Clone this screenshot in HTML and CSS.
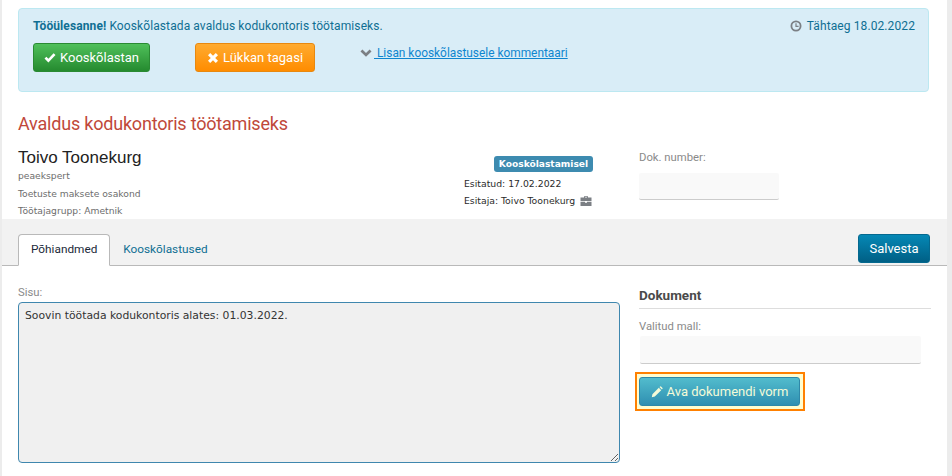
FILE: index.html
```html
<!DOCTYPE html>
<html lang="en">
<head>
  <meta charset="UTF-8">
  <meta name="viewport" content="width=device-width, initial-scale=1.0">
  <title>Avaldus kodukontoris töötamiseks</title>
  <link rel="stylesheet" href="styles.css">
</head>
<body>
  <div class="page">
    <!-- Tööülesanne -->
    <section class="task">
      <div class="task-top">
        <p class="task-text"><strong>Tööülesanne!</strong> Kooskõlastada avaldus kodukontoris töötamiseks.</p>
        <span class="deadline">
          <svg class="icon-clock" viewBox="0 0 12 12"><circle cx="6" cy="6" r="4.6" fill="none" stroke="#7b7f84" stroke-width="1.8"/><path d="M6 3.2V6.4H8.6" fill="none" stroke="#7b7f84" stroke-width="1.2"/></svg>
          Tähtaeg 18.02.2022
        </span>
      </div>
      <div class="task-actions">
        <button class="btn btn-green">
          <svg class="icon" viewBox="0 0 12 12"><path d="M.5 6.5L4.4 10.6L11.5 3L9.6 1.2L4.4 6.8L2.4 4.7Z" fill="#fff"/></svg>
          Kooskõlastan
        </button>
        <button class="btn btn-orange">
          <svg class="icon" viewBox="0 0 12 12"><path d="M1 3.2L3.2 1L6 3.8L8.8 1L11 3.2L8.2 6L11 8.8L8.8 11L6 8.2L3.2 11L1 8.8L3.8 6Z" fill="#fff"/></svg>
          Lükkan tagasi
        </button>
        <a class="comment-link" href="javascript:void(0);">
          <svg class="icon-chevron" viewBox="0 0 12 8"><path d="M.5 2.4L2.4 .5L6 4L9.6 .5L11.5 2.4L6 7.8Z" fill="#7b7f84"/></svg>
          <span class="comment-text"> Lisan kooskõlastusele kommentaari</span>
        </a>
      </div>
    </section>

    <h1 class="doc-title">Avaldus kodukontoris töötamiseks</h1>

    <div class="info">
      <div class="person">
        <div class="person-name">Toivo Toonekurg</div>
        <div class="person-line">peaekspert</div>
        <div class="person-line">Toetuste maksete osakond</div>
        <div class="person-line">Töötajagrupp: Ametnik</div>
      </div>
      <div class="status">
        <span class="badge">Kooskõlastamisel</span>
        <div class="status-line">Esitatud: 17.02.2022</div>
        <div class="status-line">Esitaja: Toivo Toonekurg
          <svg class="icon-case" viewBox="0 0 12 12"><path d="M4 2.5V1.2H8V2.5H11.5V6H.5V2.5ZM5 2.5H7V2H5ZM.5 6.8H5V7.8H7V6.8H11.5V11H.5Z" fill="#7b7f84"/></svg>
        </div>
      </div>
      <div class="number">
        <label class="field-label">Dok. number:</label>
        <div class="field number-field"></div>
      </div>
    </div>

    <div class="tabbar">
      <nav class="tabs">
        <a class="tab active" href="javascript:void(0);">Põhiandmed</a>
        <a class="tab" href="javascript:void(0);">Kooskõlastused</a>
      </nav>
      <button class="btn btn-save">Salvesta</button>
    </div>

    <main class="content">
      <div class="main-col">
        <label class="field-label">Sisu:</label>
        <textarea class="body-text" readonly>Soovin töötada kodukontoris alates: 01.03.2022.</textarea>
      </div>
      <aside class="doc-col">
        <h2 class="doc-heading">Dokument</h2>
        <label class="field-label">Valitud mall:</label>
        <div class="field template-field"></div>
        <div class="highlight">
          <button class="btn btn-info">
            <svg class="icon icon-pencil" viewBox="0 0 12 12"><path d="M.8 11.2L1.4 8.2L7.8 1.8L10.2 4.2L3.8 10.6ZM8.5 1.1L9.2 .5Q9.6 .2 10 .5L11.5 2Q11.8 2.4 11.5 2.8L10.9 3.5Z" fill="#f4fbd8"/></svg>
            Ava dokumendi vorm
          </button>
        </div>
      </aside>
    </main>
  </div>
</body>
</html>
```

FILE: styles.css
```css
html, body {
  height: 100%;
}
body {
  margin: 0;
  font-family: Roboto, Arial, sans-serif;
  font-size: 12px;
  background-color: #ececec;
  color: #333333;
  overflow: hidden;
}
.page {
  box-sizing: border-box;
  width: 945px;
  height: 476px;
  margin-left: 2px;
  padding-top: 8px;
  background-color: #ffffff;
}
.task {
  box-sizing: border-box;
  width: 911px;
  height: 84px;
  margin-left: 16px;
  padding: 9px 13px 0 14px;
  background-color: #d9edf7;
  border: 1px solid #bce8f1;
  border-radius: 4px;
  color: #0f6f93;
}
.task-top {
  display: flex;
  justify-content: space-between;
  font-size: 12px;
  letter-spacing: .1px;
  line-height: 16px;
}
.task-text {
  margin: 0;
}
.deadline {
  display: flex;
  align-items: center;
  gap: 5px;
}
.icon-clock {
  width: 12px;
  height: 12px;
}
.task-actions {
  display: flex;
  align-items: flex-start;
  margin-top: 9px;
}
.btn {
  display: inline-flex;
  align-items: center;
  justify-content: center;
  gap: 4px;
  box-sizing: border-box;
  padding: 0;
  border-radius: 3px;
  font-family: Roboto, Arial, sans-serif;
  font-size: 13px;
  color: #ffffff;
  cursor: pointer;
}
.icon {
  width: 12px;
  height: 12px;
}
.btn-green {
  width: 117px;
  height: 29px;
  background: linear-gradient(#4fc05a, #258a2f);
  border: 1px solid #2a8a33;
}
.btn-orange {
  width: 120px;
  height: 29px;
  margin-left: 45px;
  background: linear-gradient(#ffab30, #ff8c00);
  border: 1px solid #e8880f;
}
.comment-link {
  display: flex;
  align-items: center;
  gap: 2px;
  margin: 3px 0 0 45px;
  font-size: 11.9px;
  color: #0f86cf;
  text-decoration: none;
}
.icon-chevron {
  width: 12px;
  height: 8px;
}
.comment-text {
  text-decoration: underline;
  white-space: pre;
}
.doc-title {
  margin: 20px 0 0 16px;
  font-size: 18px;
  font-weight: 400;
  letter-spacing: -.2px;
  line-height: 24px;
  color: #c0483a;
}
.info {
  display: flex;
  box-sizing: border-box;
  height: 72px;
  margin-top: 11px;
  padding: 2px 0 0 16px;
}
.person {
  width: 446px;
}
.person-name {
  font-family: "Liberation Sans", Arial, sans-serif;
  font-size: 17px;
  line-height: 18px;
  color: #222222;
}
.person-line {
  font-family: "DejaVu Sans", sans-serif;
  font-size: 9.2px;
  line-height: 17.5px;
  color: #6d6d6d;
}
.status {
  width: 175px;
  padding-top: 7px;
  font-family: "DejaVu Sans", sans-serif;
  font-size: 9.3px;
  color: #2b2b2b;
}
.badge {
  display: block;
  box-sizing: border-box;
  width: 99px;
  height: 16px;
  margin: 0 0 5px 30px;
  background-color: #3d8bb0;
  border-radius: 3px;
  color: #ffffff;
  font-size: 9.1px;
  font-weight: 700;
  line-height: 16px;
  text-align: center;
}
.status-line {
  display: flex;
  align-items: center;
  gap: 5px;
  margin-top: 3px;
  line-height: 14px;
}
.icon-case {
  width: 12px;
  height: 12px;
}
.field-label {
  display: block;
  font-size: 11.3px;
  line-height: 13px;
  color: #8a8a8a;
}
.field {
  background-color: #f9f9f9;
  border-bottom: 1px solid #cccccc;
  border-radius: 2px;
}
.number {
  padding-top: 2px;
}
.number-field {
  width: 140px;
  height: 26px;
  margin-top: 9px;
}
.tabbar {
  display: flex;
  justify-content: space-between;
  align-items: flex-end;
  box-sizing: border-box;
  height: 47px;
  padding: 0 17px 0 16px;
  background-color: #f2f2f2;
  border-bottom: 1px solid #b9b9b9;
}
.tabs {
  display: flex;
  margin-bottom: -1px;
}
.tab {
  box-sizing: border-box;
  height: 32px;
  padding: 0 12px;
  border: 1px solid transparent;
  border-radius: 4px 4px 0 0;
  font-size: 11.8px;
  line-height: 29px;
  color: #0f6f93;
  text-decoration: none;
}
.tab.active {
  background-color: #ffffff;
  border-color: #b9b9b9;
  border-bottom-color: #ffffff;
  color: #1b2a3a;
}
.btn-save {
  width: 72px;
  height: 29px;
  margin-bottom: 2px;
  background: linear-gradient(#0588b5, #005f85);
  border: 1px solid #05698f;
}
.content {
  display: flex;
  padding: 20px 0 0 16px;
}
.main-col {
  width: 602px;
}
.body-text {
  display: block;
  box-sizing: border-box;
  width: 602px;
  height: 161px;
  margin-top: 3px;
  padding: 6px 6px;
  background-color: #f0f0f0;
  border: 1px solid #3f87ae;
  border-radius: 4px;
  outline: none;
  font-family: "DejaVu Sans", sans-serif;
  font-size: 10.8px;
  line-height: 14px;
  color: #333333;
}
.doc-col {
  width: 292px;
  margin-left: 19px;
}
.doc-heading {
  box-sizing: border-box;
  height: 23px;
  margin: 0 0 11px;
  padding-top: 1px;
  border-bottom: 1px solid #dddddd;
  font-size: 13.5px;
  line-height: 16px;
  color: #4a4a4a;
}
.template-field {
  width: 281px;
  height: 27px;
  margin: 3px 0 0 1px;
}
.highlight {
  box-sizing: border-box;
  width: 170px;
  height: 39px;
  margin: 8px 0 0 -4px;
  padding: 3px 2px;
  background-color: #fffdd0;
  border: 2px solid #ff8000;
}
.btn-info {
  width: 161px;
  height: 29px;
  background: linear-gradient(#52bccd, #2f8fb1);
  border: 1px solid #2f88a8;
  color: #f4fbd8;
}
```
